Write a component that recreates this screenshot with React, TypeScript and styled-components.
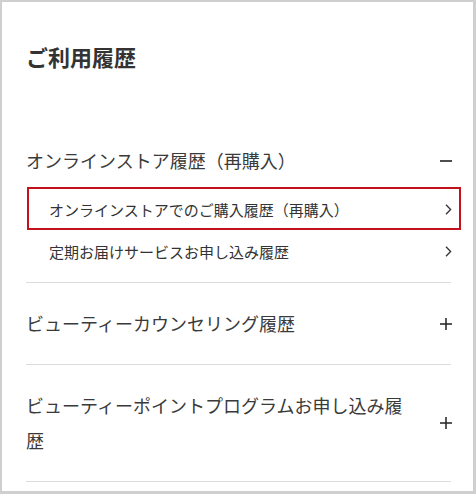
import React from "react"
import styled, { createGlobalStyle } from "styled-components"

const GlobalStyle = createGlobalStyle`
  html, body {
    margin: 0;
    padding: 0;
    background: #ffffff;
  }
  body {
    font-family: "Noto Sans CJK JP", "Noto Sans", sans-serif;
    color: #333333;
  }
  * {
    box-sizing: border-box;
  }
`

const Frame = styled.main`
  min-height: 100vh;
  border-style: solid;
  border-color: #cfcfcf;
  border-width: 2px 3px 3px 2px;
  padding: 38px 22px 0 24px;
  background: #ffffff;
`

const Title = styled.h1`
  margin: 0;
  font-size: 22px;
  line-height: 32px;
  font-weight: 700;
  color: #333333;
`

const List = styled.ul`
  list-style: none;
  margin: 48px 0 0;
  padding: 0;
`

const Section = styled.li<{ $open?: boolean }>`
  border-bottom: 1px solid #dcdcdc;
  padding-bottom: ${({ $open }) => ($open ? "10px" : "0")};
`

const Header = styled.div<{ $open?: boolean }>`
  display: flex;
  align-items: center;
  gap: 30px;
  padding: ${({ $open }) => ($open ? "23px 0 10px" : "23px 0")};
  cursor: pointer;
`

const HeaderText = styled.span`
  flex: 1;
  font-size: 18px;
  line-height: 35px;
  color: #3a3a3a;
`

const Toggle = styled.svg`
  flex: none;
  width: 12px;
  height: 12px;
  margin-right: -1px;
`

const SubList = styled.ul`
  list-style: none;
  margin: 0;
  padding: 0;
`

const SubItem = styled.li<{ $highlight?: boolean }>`
  position: relative;
  display: flex;
  align-items: center;
  justify-content: space-between;
  height: 42px;
  padding-left: 23px;
  font-size: 15px;
  color: #333333;

  ${({ $highlight }) =>
    $highlight &&
    `
    &::after {
      content: "";
      position: absolute;
      left: 1px;
      right: -10px;
      top: -1px;
      bottom: 0;
      border: 2px solid #c4121c;
      pointer-events: none;
    }
  `}
`

const Chevron = styled.svg`
  flex: none;
  width: 7px;
  height: 11px;
  margin-right: -1px;
`

const Minus = () => (
  <Toggle viewBox="0 0 12 12">
    <path d="M0 6h12" stroke="#222" strokeWidth="1.6" />
  </Toggle>
)

const Plus = () => (
  <Toggle viewBox="0 0 12 12">
    <path d="M0 6h12M6 0v12" stroke="#222" strokeWidth="1.5" />
  </Toggle>
)

const Arrow = () => (
  <Chevron viewBox="0 0 7 11">
    <path d="M1 0.8l4.6 4.7L1 10.2" fill="none" stroke="#333" strokeWidth="1.3" />
  </Chevron>
)

const App = () => {
  return (
    <>
      <GlobalStyle />
      <Frame>
        <Title>ご利用履歴</Title>
        <List>
          <Section $open>
            <Header $open>
              <HeaderText>オンラインストア履歴（再購入）</HeaderText>
              <Minus />
            </Header>
            <SubList>
              <SubItem $highlight>
                <span>オンラインストアでのご購入履歴（再購入）</span>
                <Arrow />
              </SubItem>
              <SubItem>
                <span>定期お届けサービスお申し込み履歴</span>
                <Arrow />
              </SubItem>
            </SubList>
          </Section>
          <Section>
            <Header>
              <HeaderText>ビューティーカウンセリング履歴</HeaderText>
              <Plus />
            </Header>
          </Section>
          <Section>
            <Header>
              <HeaderText>ビューティーポイントプログラムお申し込み履歴</HeaderText>
              <Plus />
            </Header>
          </Section>
        </List>
      </Frame>
    </>
  )
}

export default App
